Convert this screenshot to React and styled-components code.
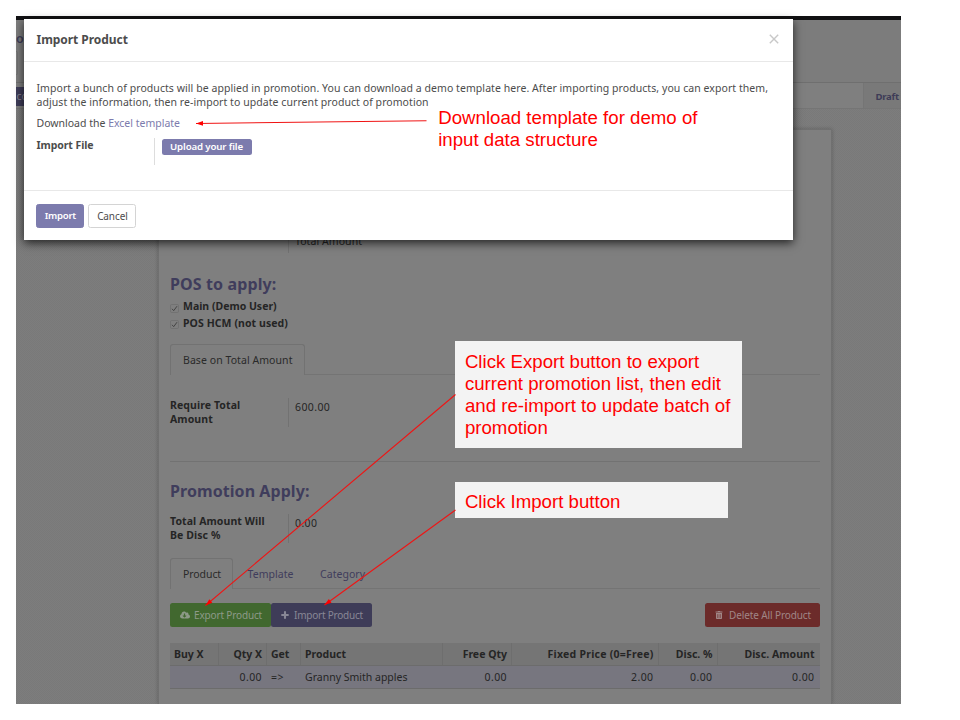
import React from "react";
import styled, { createGlobalStyle } from "styled-components";
import { FaCloudDownloadAlt, FaTrashAlt } from "react-icons/fa";

const GlobalStyle = createGlobalStyle`
  * { box-sizing: border-box; }
  body { margin: 0; background: #fff; font-family: "Noto Sans", sans-serif; }
`;

const Slide = styled.div`
  position: relative;
  width: 960px;
  height: 720px;
  padding: 16px;
  overflow: hidden;
  background: #fff;
`;

const Frame = styled.div`
  width: 884.5px;
  height: 688px;
  overflow: hidden;
  background: #7c7c7c;
  color: #252525;
  font-size: 10.5px;
  line-height: 14px;
`;

const NavBar = styled.div`
  height: 4px;
  background: #111113;
`;

const ControlPanel = styled.div`
  display: flex;
  flex-direction: column;
  align-items: flex-start;
  height: 63px;
  padding-top: 12px;
  border-bottom: 1px solid #6f6f6f;
`;

const Crumb = styled.span`
  color: #3e3c57;
  font-size: 12.5px;
  font-weight: 600;
  height: 19px;
  line-height: 13px;
`;

const GhostEdge = styled.div`
  width: 2px;
  height: 24px;
  border: 1px solid #707070;
  border-left: 0;
  border-radius: 0 2px 2px 0;
`;

const StatusBar = styled.div`
  display: flex;
  justify-content: space-between;
  height: 26px;
  background: #7f7f7f;
  border-bottom: 1px solid #757575;
`;

const StatusAction = styled.div`
  width: 40px;
  height: 19px;
  margin-top: 4px;
  padding-left: 0.5px;
  background: #3e3c58;
  color: #85848f;
  line-height: 19px;
`;

const Stage = styled.div`
  width: 38px;
  padding-left: 12px;
  border-left: 1px solid #757575;
  background: #797979;
  color: #3e3c57;
  font-size: 9.6px;
  font-weight: 700;
  letter-spacing: -0.3px;
  line-height: 27px;
  white-space: nowrap;
`;

const Content = styled.div`
  height: 595px;
  padding: 20px 0 0 142px;
  background: conic-gradient(#797979 25%, #7d7d7d 0 50%, #797979 0 75%, #7d7d7d 0) 0 0 / 2px 2px;
`;

const Sheet = styled.div`
  display: flex;
  flex-direction: column;
  width: 674px;
  height: 575px;
  padding: 0 11.5px 0 11px;
  border: 1px solid #707070;
  border-bottom: 0;
  background: #7f7f7f;
  box-shadow: 0 0 4px rgba(0, 0, 0, 0.22);
`;

const Field = styled.div`
  display: flex;
  height: ${(p) => p.$h}px;
  margin-top: ${(p) => p.$top}px;
`;

const FieldLabel = styled.div`
  width: 118px;
  font-weight: 700;
  letter-spacing: 0.09px;
  white-space: pre-line;
`;

const FieldValue = styled.div`
  padding: ${(p) => p.$pad}px 0 0 6px;
  border-left: 1px solid #727272;
  letter-spacing: ${(p) => (p.$num ? 0.4 : 0.07)}px;
`;

const Heading = styled.div`
  height: 22px;
  margin-top: ${(p) => p.$top}px;
  color: #3f3d5c;
  font-size: 16px;
  font-weight: 700;
  letter-spacing: ${(p) => p.$ls}px;
  line-height: 22px;
`;

const CheckList = styled.div`
  margin-top: 3px;
`;

const CheckRow = styled.div`
  display: flex;
  align-items: center;
  gap: 4px;
  height: 16.5px;
  font-weight: 700;
  letter-spacing: ${(p) => p.$ls}px;

  svg { margin-top: 4px; }
`;

const Tabs = styled.div`
  display: flex;
  height: 31px;
  margin-top: ${(p) => p.$top}px;
  border-bottom: 1px solid #747474;
`;

const Tab = styled.div`
  height: 31px;
  padding: 0 ${(p) => p.$right || 11}px 0 ${(p) => p.$left || 12}px;
  border: 1px solid ${(p) => (p.$active ? "#727272" : "transparent")};
  border-bottom: 0;
  border-radius: 3px 3px 0 0;
  background: ${(p) => (p.$active ? "#7f7f7f" : "transparent")};
  color: ${(p) => (p.$active ? "#2a2a2a" : "#3f3d5c")};
  letter-spacing: ${(p) => p.$ls || 0}px;
  line-height: 30px;
  white-space: nowrap;
`;

const Rule = styled.div`
  height: 1px;
  margin-top: 34px;
  background: #727272;
`;

const ButtonRow = styled.div`
  display: flex;
  height: 24px;
  margin-top: 14px;
`;

const tones = {
  green: ["#41682f", "#8d9a88"],
  purple: ["#3e3c58", "#888796"],
  red: ["#6c2b2a", "#a08686"],
};

const ActionButton = styled.div`
  display: flex;
  align-items: center;
  width: ${(p) => p.$w}px;
  padding-left: 10px;
  gap: ${(p) => p.$gap}px;
  margin-left: ${(p) => (p.$last ? "auto" : 0)};
  border-radius: 2.5px;
  background: ${(p) => tones[p.$tone][0]};
  color: ${(p) => tones[p.$tone][1]};
  font-size: 10px;
  letter-spacing: ${(p) => p.$ls}px;
  white-space: nowrap;
`;

const Grid = styled.div`
  display: grid;
  grid-template-columns: 49px 48px 34px 142px 69px 146.5px 59px 102px;
  height: 23px;
  margin-top: ${(p) => (p.$head ? 16 : 0)}px;
  background: ${(p) => (p.$head ? "#757575" : "#77767f")};
  border-bottom: 1px solid #6c6c6c;
  font-weight: ${(p) => (p.$head ? 700 : 400)};
  line-height: 22px;
`;

const Cell = styled.div`
  padding: 0 4px;
  border-right: 1px solid ${(p) => (p.$line ? "#6e6e6e" : "transparent")};
  text-align: ${(p) => (p.$right ? "right" : "left")};
  letter-spacing: ${(p) => p.$ls || 0}px;
  white-space: nowrap;
`;

const Modal = styled.div`
  position: absolute;
  left: 24px;
  top: 19px;
  width: 769px;
  height: 221px;
  background: #fff;
  color: #4c4c4c;
  font-size: 10.5px;
  line-height: 14px;
  box-shadow: 0 3px 9px rgba(0, 0, 0, 0.72);
`;

const ModalHeader = styled.div`
  display: flex;
  justify-content: space-between;
  align-items: center;
  height: 43px;
  padding: 0 14px 0 12.5px;
  border-bottom: 1px solid #e8e8e8;
  font-size: 12px;
  font-weight: 700;
  letter-spacing: -0.04px;

  svg { margin-bottom: 2px; }
`;

const ModalBody = styled.div`
  height: 129px;
  padding: 19px 12.5px 0;
  border-bottom: 1px solid #e8e8e8;
`;

const Line = styled.div`
  letter-spacing: 0.063px;
  white-space: nowrap;
`;

const DownloadLine = styled(Line)`
  margin-top: 7px;
  letter-spacing: 0;
`;

const TemplateLink = styled.span`
  color: #7c7bad;
`;

const ImportField = styled.div`
  display: flex;
  height: 27px;
  margin-top: 8px;
`;

const ImportLabel = styled.div`
  width: 117.5px;
  font-weight: 700;
  letter-spacing: -0.07px;
`;

const ImportValue = styled.div`
  padding: 1px 0 0 6.5px;
  border-left: 1px solid #ddd;
`;

const UploadButton = styled.div`
  width: 90px;
  height: 16px;
  border-radius: 2.5px;
  background: #7c7bad;
  color: #fff;
  font-size: 9.7px;
  font-weight: 600;
  letter-spacing: -0.14px;
  line-height: 16px;
  text-align: center;
`;

const ModalFooter = styled.div`
  display: flex;
  gap: 4px;
  padding: 13px 12.4px;
`;

const FooterButton = styled.div`
  width: 48px;
  height: 24px;
  border: 1px solid ${(p) => (p.$primary ? "#7c7bad" : "#d4d4d4")};
  border-radius: 2.5px;
  background: ${(p) => (p.$primary ? "#7c7bad" : "#fff")};
  color: ${(p) => (p.$primary ? "#fff" : "#4c4c4c")};
  font-size: ${(p) => (p.$primary ? 9.6 : 10)}px;
  font-weight: ${(p) => (p.$primary ? 600 : 400)};
  letter-spacing: ${(p) => (p.$primary ? -0.25 : -0.1)}px;
  line-height: 22px;
  text-align: center;
`;

const Note = styled.div`
  position: absolute;
  left: ${(p) => p.$x}px;
  top: ${(p) => p.$y}px;
  width: ${(p) => p.$w}px;
  height: ${(p) => p.$h}px;
  padding: 9.5px;
  background: ${(p) => (p.$plain ? "transparent" : "#f3f3f3")};
  color: #f00;
  font-family: "Liberation Sans", Arial, sans-serif;
  font-size: 18.67px;
  line-height: 22px;
  white-space: pre-line;
`;

const Arrows = styled.svg`
  position: absolute;
  left: 0;
  top: 0;
`;

function CheckBox() {
  return (
    <svg width="9" height="9" viewBox="0 0 9 9" fill="none">
      <rect x="0.5" y="0.5" width="8" height="8" rx="1.2" stroke="#727272" />
      <path d="M2 4.8 3.7 6.7 7 2.2" stroke="#444" strokeWidth="1" />
    </svg>
  );
}

function PlusIcon() {
  return (
    <svg width="8" height="8" viewBox="0 0 8 8" stroke="currentColor" strokeWidth="2.1" strokeLinecap="round">
      <path d="M4 1.1V6.9M1.1 4H6.9" />
    </svg>
  );
}

function Arrow({ x1, y1, x2, y2 }) {
  const a = Math.atan2(y2 - y1, x2 - x1);
  const point = (d, s) =>
    `${x2 - d * Math.cos(a) - s * Math.sin(a)},${y2 - d * Math.sin(a) + s * Math.cos(a)}`;
  return (
    <g stroke="#f01414" fill="#f00">
      <line x1={x1} y1={y1} x2={x2} y2={y2} strokeWidth="1.1" />
      <polygon points={`${x2},${y2} ${point(7, 2.3)} ${point(7, -2.3)}`} stroke="none" />
    </g>
  );
}

const columns = [
  { head: "Buy X", value: "" },
  { head: "Qty X", value: "0.00", right: true, num: true },
  { head: "Get", value: "=>", num: true },
  { head: "Product", value: "Granny Smith apples" },
  { head: "Free Qty", value: "0.00", right: true, num: true },
  { head: "Fixed Price (0=Free)", value: "2.00", right: true, ls: 0.24, num: true },
  { head: "Disc. %", value: "0.00", right: true, num: true },
  { head: "Disc. Amount", value: "0.00", right: true, ls: 0.05, num: true },
];

export default function App() {
  return (
    <Slide>
      <GlobalStyle />
      <Frame>
        <NavBar />
        <ControlPanel>
          <Crumb>o</Crumb>
          <GhostEdge />
        </ControlPanel>
        <StatusBar>
          <StatusAction>co</StatusAction>
          <Stage>Draft</Stage>
        </StatusBar>
        <Content>
          <Sheet>
            <Field $h={28} $top={95}>
              <FieldLabel />
              <FieldValue $pad={9}>Total Amount</FieldValue>
            </Field>
            <Heading $top={20} $ls={0.12}>POS to apply:</Heading>
            <CheckList>
              <CheckRow $ls={0}><CheckBox />Main (Demo User)</CheckRow>
              <CheckRow $ls={0.08}><CheckBox />POS HCM (not used)</CheckRow>
            </CheckList>
            <Tabs $top={13}>
              <Tab $active $ls={0.065}>Base on Total Amount</Tab>
            </Tabs>
            <Field $h={29} $top={23}>
              <FieldLabel>{"Require Total\nAmount"}</FieldLabel>
              <FieldValue $num $pad={2}>600.00</FieldValue>
            </Field>
            <Rule />
            <Heading $top={18} $ls={0.07}>Promotion Apply:</Heading>
            <Field $h={29} $top={12}>
              <FieldLabel>{"Total Amount Will\nBe Disc %"}</FieldLabel>
              <FieldValue $num $pad={2}>0.00</FieldValue>
            </Field>
            <Tabs $top={15}>
              <Tab $active $ls={-0.08}>Product</Tab>
              <Tab $left={13.5} $right={12} $ls={0.05}>Template</Tab>
              <Tab $left={12.5} $ls={0.03}>Category</Tab>
            </Tabs>
            <ButtonRow>
              <ActionButton $tone="green" $w={101} $gap={4} $ls={-0.15}>
                <FaCloudDownloadAlt size={10} />
                Export Product
              </ActionButton>
              <ActionButton $tone="purple" $w={100.5} $gap={5} $ls={-0.22}>
                <PlusIcon />
                Import Product
              </ActionButton>
              <ActionButton $tone="red" $w={115} $gap={6.5} $ls={-0.11} $last>
                <FaTrashAlt size={8} />
                Delete All Product
              </ActionButton>
            </ButtonRow>
            <Grid $head>
              {columns.map((c) => (
                <Cell key={c.head} $right={c.right} $ls={c.ls} $line={c.head !== "Disc. Amount"}>
                  {c.head}
                </Cell>
              ))}
            </Grid>
            <Grid>
              {columns.map((c) => (
                <Cell key={c.head} $right={c.right} $ls={c.num ? 0.4 : 0}>{c.value}</Cell>
              ))}
            </Grid>
          </Sheet>
        </Content>
      </Frame>

      <Modal>
        <ModalHeader>
          Import Product
          <svg width="10" height="10" viewBox="0 0 10 10" stroke="#c8c8c8" strokeWidth="1.4">
            <path d="M0.8 0.8 9.2 9.2M9.2 0.8 0.8 9.2" />
          </svg>
        </ModalHeader>
        <ModalBody>
          <Line>
            Import a bunch of products will be applied in promotion. You can download a demo
            template here. After importing products, you can export them,
          </Line>
          <Line>adjust the information, then re-import to update current product of promotion</Line>
          <DownloadLine>
            Download the <TemplateLink>Excel template</TemplateLink>
          </DownloadLine>
          <ImportField>
            <ImportLabel>Import File</ImportLabel>
            <ImportValue>
              <UploadButton>Upload your file</UploadButton>
            </ImportValue>
          </ImportField>
        </ModalBody>
        <ModalFooter>
          <FooterButton $primary>Import</FooterButton>
          <FooterButton>Cancel</FooterButton>
        </ModalFooter>
      </Modal>

      <Note $plain $x={428.7} $y={97} $w={290} $h={64}>
        {"Download template for demo of\ninput data structure"}
      </Note>
      <Note $x={455.4} $y={341} $w={287} $h={107}>
        {"Click Export button to export\ncurrent promotion list, then edit\nand re-import to update batch of\npromotion"}
      </Note>
      <Note $x={455.4} $y={481.7} $w={273} $h={36.7}>Click Import button</Note>

      <Arrows width="960" height="720">
        <Arrow x1={426.5} y1={120.7} x2={196} y2={123.5} />
        <Arrow x1={455.5} y1={394.5} x2={205.5} y2={605.5} />
        <Arrow x1={455.5} y1={510} x2={324.5} y2={605} />
      </Arrows>
    </Slide>
  );
}
